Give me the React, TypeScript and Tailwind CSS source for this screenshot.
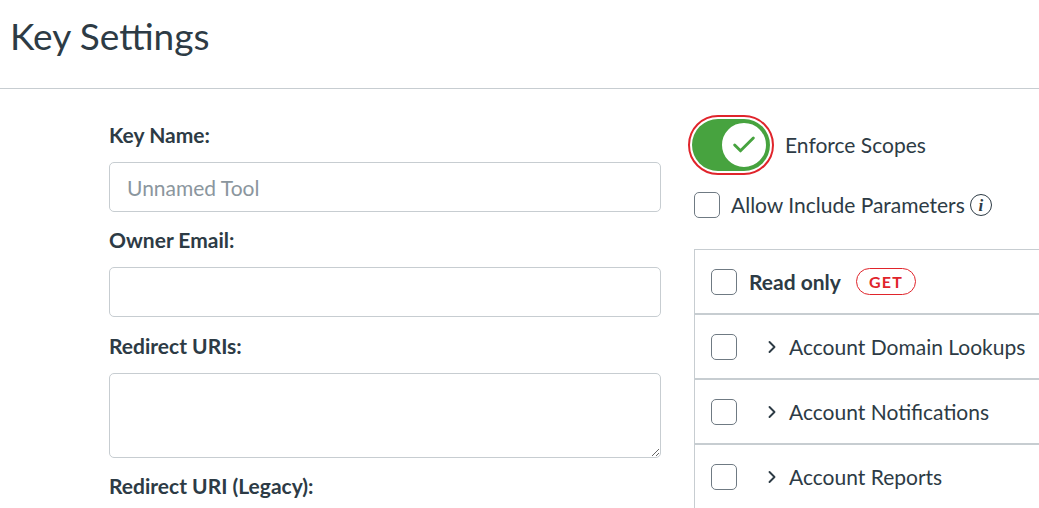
import React from 'react';
import { Check, ChevronRight } from 'lucide-react';

const Box: React.FC = () => (
  <span className="block w-[26px] h-[26px] shrink-0 rounded-[5px] border-[1.5px] border-[#6f7a83] bg-white" />
);

const scopes = ['Account Domain Lookups', 'Account Notifications', 'Account Reports'];

export default function App() {
  return (
    <div className="w-[1039px] h-[508px] overflow-hidden bg-white text-[#2d3b45] font-['Lato','Liberation_Sans',sans-serif]">
      {/* Header */}
      <div className="h-[89px] border-b border-[#c7cdd1] pl-[10px] pt-[14px]">
        <h1 className="text-[37px] leading-[44px] font-normal">Key Settings</h1>
      </div>

      <div className="flex pl-[109px] pt-[26px]">
        {/* Left column: form fields */}
        <div className="w-[552px] shrink-0 pt-[8px]">
          <label className="block text-[21px] leading-[24px] font-bold">Key Name:</label>
          <input
            type="text"
            placeholder="Unnamed Tool"
            className="mt-[15px] block w-full h-[50px] rounded-[5px] border border-[#c7cdd1] px-[17px] text-[21px] placeholder:text-[#8b969e] outline-none"
          />
          <label className="mt-[16px] block text-[21px] leading-[24px] font-bold">Owner Email:</label>
          <input
            type="text"
            className="mt-[15px] block w-full h-[50px] rounded-[5px] border border-[#c7cdd1] px-[17px] text-[21px] outline-none"
          />
          <label className="mt-[17px] block text-[21px] leading-[24px] font-bold">Redirect URIs:</label>
          <textarea className="mt-[15px] block w-full h-[85px] rounded-[5px] border border-[#c7cdd1] px-[17px] py-2 text-[21px] outline-none" />
          <label className="mt-[16px] block text-[21px] leading-[24px] font-bold">Redirect URI (Legacy):</label>
        </div>

        {/* Right column: scopes */}
        <div className="ml-[27px] w-[400px] shrink-0">
          <div className="flex items-center">
            <span className="flex items-center justify-center w-[86px] h-[60px] rounded-full border-2 border-[#e0242b] bg-white">
              <span className="flex items-center justify-end w-[78px] h-[52px] rounded-full bg-[#47a33f] pr-[2px]">
                <span className="flex items-center justify-center w-[48px] h-[48px] rounded-full bg-white border-2 border-[#47a33f]">
                  <Check className="w-[28px] h-[28px] text-[#47a33f]" strokeWidth={2.5} />
                </span>
              </span>
            </span>
            <span className="ml-[11px] text-[21px] leading-[24px]">Enforce Scopes</span>
          </div>

          <div className="mt-[17px] ml-[6px] flex items-center">
            <Box />
            <span className="ml-[11px] text-[21px] leading-[24px]">Allow Include Parameters</span>
            <span className="ml-[5px] flex items-center justify-center w-[22px] h-[22px] rounded-full border-[1.5px] border-[#2d3b45] text-[17px] leading-none italic font-bold font-['Liberation_Serif',serif]">
              i
            </span>
          </div>

          <div className="mt-[31px] ml-[6px] border-l border-t border-[#c7cdd1]">
            <div className="h-[65px] flex items-center pl-[16px] border-b-[2px] border-[#c7cdd1]">
              <Box />
              <span className="ml-[12px] text-[21px] leading-[24px] font-bold">Read only</span>
              <span className="ml-[15px] h-[27px] px-[12px] flex items-center rounded-full border-[1.5px] border-[#e0242b] text-[#e0242b] text-[16px] font-bold tracking-[0.08em]">
                GET
              </span>
            </div>
            {scopes.map((s) => (
              <div key={s} className="h-[65px] flex items-center pl-[16px] border-b-[2px] border-[#c7cdd1]">
                <Box />
                <ChevronRight className="ml-[25px] w-[20px] h-[20px] text-[#2d3b45]" strokeWidth={2.25} />
                <span className="ml-[7px] text-[21px] leading-[24px]">{s}</span>
              </div>
            ))}
          </div>
        </div>
      </div>
    </div>
  );
}
